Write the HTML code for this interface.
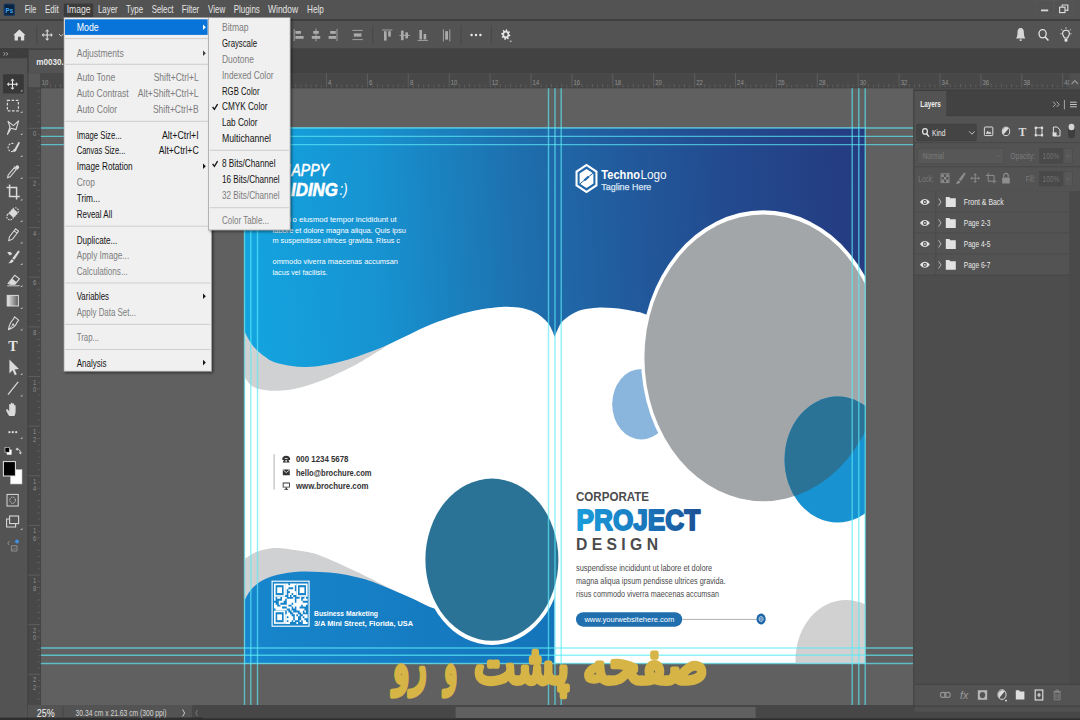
<!DOCTYPE html>
<html lang="en">
<head>
<meta charset="utf-8">
<title>Photoshop - Image &gt; Mode</title>
<style>
html,body{margin:0;padding:0;background:#535353;overflow:hidden;}
body{width:1080px;height:720px;position:relative;font-family:"Liberation Sans", sans-serif;}
svg{display:block;position:absolute;left:0;top:0;}
text{font-family:"Liberation Sans", sans-serif;white-space:pre;}
</style>
</head>
<body>
<svg width="1080" height="720" viewBox="0 0 1080 720" shape-rendering="geometricPrecision">
<defs>
<linearGradient id="gdoc" gradientUnits="userSpaceOnUse" x1="244" y1="245" x2="866" y2="205"><stop offset="0" stop-color="#13a4e0"/><stop offset="0.21" stop-color="#1793d1"/><stop offset="0.44" stop-color="#1e70ae"/><stop offset="0.6" stop-color="#215c9e"/><stop offset="0.79" stop-color="#23498e"/><stop offset="1" stop-color="#253b80"/></linearGradient>
<linearGradient id="gbot" gradientUnits="userSpaceOnUse" x1="244" y1="600" x2="556" y2="600"><stop offset="0" stop-color="#1786cc"/><stop offset="1" stop-color="#1474ba"/></linearGradient>
<linearGradient id="gproj" gradientUnits="userSpaceOnUse" x1="576" y1="0" x2="701" y2="0"><stop offset="0" stop-color="#199ddb"/><stop offset="0.45" stop-color="#1a7fc4"/><stop offset="1" stop-color="#1d4f94"/></linearGradient>
<clipPath id="cdoc"><rect x="244.5" y="127.5" width="620.8" height="536"/></clipPath>
<clipPath id="cgrey"><ellipse cx="763.2" cy="357.8" rx="118.8" ry="143.4"/></clipPath>
<filter id="sh" x="-10%" y="-10%" width="120%" height="120%"><feDropShadow dx="1.5" dy="1.5" stdDeviation="1.2" flood-color="#000" flood-opacity="0.45"/></filter>
</defs>
<rect x="0.0" y="0.0" width="1080.0" height="720.0" fill="#535353" />
<rect x="0.0" y="19.3" width="1080.0" height="1.5" fill="#3a3a3a" />
<rect x="0.0" y="48.3" width="1080.0" height="25.0" fill="#424242" />
<rect x="28.5" y="50.0" width="120.0" height="23.3" fill="#535353" />
<rect x="0.0" y="48.3" width="27.5" height="10.0" fill="#3d3d3d" />
<rect x="40.5" y="88.0" width="873.0" height="617.0" fill="#606060" />
<rect x="28.0" y="73.3" width="1052.0" height="14.5" fill="#484848" />
<rect x="28.0" y="73.3" width="12.7" height="632.0" fill="#484848" />
<rect x="0.0" y="58.3" width="27.7" height="662.0" fill="#535353" />
<line x1="27.9" y1="48.3" x2="27.9" y2="720.0" stroke="#3c3c3c" stroke-width="0.8" />
<g clip-path="url(#cdoc)">
<rect x="244.5" y="127.5" width="620.8" height="536.0" fill="#ffffff" />
<path d="M244.5,300 L244.5,376.7 C245.4,377.9 248.0,382.3 250.0,384.2 C252.0,386.1 254.2,387.3 256.7,388.3 C259.2,389.3 262.2,389.6 265.0,390.0 C267.8,390.4 269.1,390.9 273.3,390.8 C277.5,390.8 284.4,390.5 290.0,389.7 C295.6,388.9 301.1,387.4 306.7,385.8 C312.2,384.2 317.8,382.2 323.3,380.0 C328.9,377.8 334.4,375.1 340.0,372.5 C345.6,369.9 351.1,367.2 356.7,364.2 C362.2,361.1 369.1,356.7 373.3,354.2 C377.5,351.7 378.6,351.2 381.7,349.2 C384.8,347.2 390.3,343.2 392.0,342.0 L392,300 Z" fill="#d0d1d2"/>
<path d="M244.3,127.5 L244.3,330.8 C245.2,332.6 247.9,338.5 250.0,341.7 C252.1,344.9 254.2,347.5 256.7,350.0 C259.2,352.5 262.2,354.8 265.0,356.7 C267.8,358.6 269.1,360.2 273.3,361.7 C277.5,363.2 284.4,364.9 290.0,365.8 C295.6,366.7 301.1,367.1 306.7,367.0 C312.2,366.9 317.8,366.2 323.3,365.3 C328.9,364.4 334.4,363.1 340.0,361.7 C345.6,360.3 351.1,358.5 356.7,356.7 C362.2,354.9 367.8,353.0 373.3,350.8 C378.9,348.6 384.4,346.2 390.0,343.7 C395.6,341.2 400.9,338.6 406.7,335.8 C412.5,333.0 417.8,330.1 425.0,327.0 C432.2,323.9 441.7,320.2 450.0,317.5 C458.3,314.8 466.7,312.2 475.0,310.5 C483.3,308.8 493.8,307.6 500.0,307.0 C506.2,306.4 508.3,306.7 512.5,307.0 C516.7,307.3 520.8,307.7 525.0,308.8 C529.2,309.9 533.8,311.5 537.5,313.8 C541.2,316.1 545.0,319.6 547.5,322.5 C550.0,325.4 551.3,328.9 552.5,331.3 C553.7,333.7 554.2,336.1 554.5,337.0 C555.0,335.8 556.2,332.6 557.5,330.0 C558.8,327.4 559.6,324.2 562.5,321.3 C565.4,318.4 570.8,314.6 575.0,312.5 C579.2,310.4 583.3,309.6 587.5,308.8 C591.7,308.0 595.8,307.6 600.0,307.5 C604.2,307.4 608.3,307.7 612.5,308.0 C616.7,308.3 620.8,308.8 625.0,309.5 C629.2,310.2 634.0,311.2 637.5,312.0 C641.0,312.8 635.6,310.7 646.0,314.5 C656.4,318.3 691.0,331.6 700.0,335.0 L865.3,340 L865.3,127.5 Z" fill="url(#gdoc)"/>
<path d="M244.5,559.0 C246.2,557.9 251.4,554.1 255.0,552.5 C258.6,550.9 262.3,550.0 266.0,549.3 C269.7,548.5 271.7,547.8 277.0,548.0 C282.3,548.2 290.8,549.3 298.0,550.5 C305.2,551.7 310.3,551.9 320.0,555.4 C329.7,558.9 344.2,565.9 356.3,571.6 C368.4,577.3 383.4,585.4 392.4,589.7 C401.4,594.1 403.9,594.7 410.5,597.7 C417.1,600.7 428.4,606.1 432.0,607.8 L432,663.5 L244.5,663.5 Z" fill="#d0d1d2"/>
<path d="M244.5,600.5 C245.4,598.9 247.6,594.0 250.0,591.0 C252.4,588.0 255.6,584.8 258.9,582.5 C262.2,580.2 265.8,578.5 270.0,577.0 C274.2,575.5 278.7,574.3 284.0,573.4 C289.3,572.5 296.0,571.8 302.0,571.6 C308.0,571.4 313.9,571.7 320.0,572.0 C326.1,572.3 332.3,572.6 338.3,573.4 C344.3,574.2 350.0,575.5 356.0,577.0 C362.0,578.5 365.3,579.0 374.4,582.5 C383.5,586.0 400.9,593.5 410.5,597.7 C420.1,601.9 425.4,605.4 432.0,607.8 C438.6,610.2 447.0,611.3 450.0,612.0 L470,600 L554.5,594 L554.5,663.5 L244.5,663.5 Z" fill="url(#gbot)"/>
<ellipse cx="491.9" cy="559.9" rx="69.9" ry="85.1" fill="#ffffff"/>
<ellipse cx="491.9" cy="559.65" rx="66.5" ry="81.05" fill="#2a7396"/>
<ellipse cx="641.3" cy="404.2" rx="29.1" ry="35.3" fill="#8ab5dc"/>
<ellipse cx="763.2" cy="357.8" rx="122.2" ry="147.6" fill="#ffffff"/>
<ellipse cx="763.2" cy="357.8" rx="118.8" ry="143.4" fill="#a3a6a8"/>
<ellipse cx="837.6" cy="459.6" rx="53" ry="63" fill="#1892d0"/>
<ellipse cx="837.6" cy="459.6" rx="53" ry="63" fill="#2a7396" clip-path="url(#cgrey)"/>
<ellipse cx="846" cy="660" rx="50.5" ry="60" fill="#d1d1d2"/>
<text x="291.5" y="175.8" font-size="16.2" fill="#ffffff" font-style="italic" textLength="37.5" lengthAdjust="spacingAndGlyphs" stroke="#fff" stroke-width="0.55">APPY</text>
<text x="291.0" y="195.8" font-size="18.0" fill="#ffffff" font-weight="bold" font-style="italic" textLength="47.0" lengthAdjust="spacingAndGlyphs" stroke="#fff" stroke-width="0.6">IDING</text>
<text x="339.5" y="195.3" font-size="16.5" fill="#ffffff" font-style="italic" textLength="8.0" lengthAdjust="spacingAndGlyphs" >:)</text>
<text x="280.6" y="175.8" font-size="16.2" fill="#ffffff" font-style="italic" textLength="10.4" lengthAdjust="spacingAndGlyphs" >H</text>
<text x="258.5" y="195.8" font-size="18.0" fill="#ffffff" font-weight="bold" font-style="italic" textLength="32.0" lengthAdjust="spacingAndGlyphs" >REA</text>
<text x="272.5" y="222.1" font-size="8.0" fill="#ffffff" textLength="18.5" lengthAdjust="spacingAndGlyphs" >sed d</text>
<text x="272.5" y="232.7" font-size="8.0" fill="#ffffff" textLength="21.0" lengthAdjust="spacingAndGlyphs" >labore</text>
<text x="292.5" y="222.1" font-size="8.0" fill="#ffffff" textLength="104.2" lengthAdjust="spacingAndGlyphs" >o eiusmod tempor incididunt ut</text>
<text x="295.0" y="232.7" font-size="8.0" fill="#ffffff" textLength="110.8" lengthAdjust="spacingAndGlyphs" >et dolore magna aliqua. Quis ipsu</text>
<text x="272.5" y="243.4" font-size="8.0" fill="#ffffff" textLength="127.5" lengthAdjust="spacingAndGlyphs" >m suspendisse ultrices gravida. Risus c</text>
<text x="272.5" y="264.3" font-size="8.0" fill="#ffffff" textLength="125.5" lengthAdjust="spacingAndGlyphs" >ommodo viverra maecenas accumsan</text>
<text x="272.5" y="274.7" font-size="8.0" fill="#ffffff" textLength="55.0" lengthAdjust="spacingAndGlyphs" >lacus vel facilisis.</text>
<rect x="273.4" y="454.2" width="1.4" height="35.4" fill="#c6c6c6" />
<text x="296.0" y="461.8" font-size="8.3" fill="#333333" font-weight="bold" textLength="52.5" lengthAdjust="spacingAndGlyphs" >000 1234 5678</text>
<text x="296.0" y="475.8" font-size="8.3" fill="#333333" font-weight="bold" textLength="75.5" lengthAdjust="spacingAndGlyphs" >hello@brochure.com</text>
<text x="296.0" y="488.9" font-size="8.3" fill="#333333" font-weight="bold" textLength="72.5" lengthAdjust="spacingAndGlyphs" >www.brochure.com</text>
<g fill="#333333">
<path d="M282.3,458.6 c0,-3.9 7.8,-3.9 7.8,0 v1.3 h-2.3 v-1.3 c-0.9,-0.6 -2.3,-0.6 -3.2,0 v1.3 h-2.3 z"/>
<path d="M282.7,462.4 l1.7,-3.3 h3.6 l1.7,3.3 z"/>
<ellipse cx="286.2" cy="460.9" rx="0.9" ry="0.8" fill="#fff"/>
<rect x="282.8" y="469.5" width="7" height="5.8" rx="0.6"/>
<path d="M283.2,470 l3.1,2.6 3.1,-2.6" fill="none" stroke="#fff" stroke-width="0.8"/>
<path d="M282.7,482.6 h7.2 v5 h-7.2 z M283.6,483.4 v3.4 h5.4 v-3.4 z" fill-rule="evenodd"/>
<rect x="285.6" y="487.6" width="1.4" height="1.5"/><rect x="284.4" y="488.9" width="3.8" height="0.9"/>
</g>
<path d="M285.20,583.40h1.60v1.93h-1.60zM286.80,583.40h1.60v1.93h-1.60zM290.00,583.40h1.60v1.93h-1.60zM291.60,583.40h1.60v1.93h-1.60zM293.20,583.40h1.60v1.93h-1.60zM294.80,583.40h1.60v1.93h-1.60zM285.20,585.33h1.60v1.93h-1.60zM286.80,585.33h1.60v1.93h-1.60zM288.40,585.33h1.60v1.93h-1.60zM290.00,585.33h1.60v1.93h-1.60zM291.60,585.33h1.60v1.93h-1.60zM293.20,585.33h1.60v1.93h-1.60zM285.20,587.27h1.60v1.93h-1.60zM286.80,587.27h1.60v1.93h-1.60zM293.20,587.27h1.60v1.93h-1.60zM285.20,589.20h1.60v1.93h-1.60zM288.40,589.20h1.60v1.93h-1.60zM290.00,589.20h1.60v1.93h-1.60zM291.60,589.20h1.60v1.93h-1.60zM293.20,589.20h1.60v1.93h-1.60zM285.20,591.13h1.60v1.93h-1.60zM290.00,591.13h1.60v1.93h-1.60zM291.60,591.13h1.60v1.93h-1.60zM293.20,591.13h1.60v1.93h-1.60zM294.80,591.13h1.60v1.93h-1.60zM285.20,593.07h1.60v1.93h-1.60zM288.40,593.07h1.60v1.93h-1.60zM290.00,593.07h1.60v1.93h-1.60zM293.20,593.07h1.60v1.93h-1.60zM294.80,593.07h1.60v1.93h-1.60zM288.40,595.00h1.60v1.93h-1.60zM291.60,595.00h1.60v1.93h-1.60zM274.00,596.93h1.60v1.93h-1.60zM277.20,596.93h1.60v1.93h-1.60zM278.80,596.93h1.60v1.93h-1.60zM282.00,596.93h1.60v1.93h-1.60zM283.60,596.93h1.60v1.93h-1.60zM285.20,596.93h1.60v1.93h-1.60zM293.20,596.93h1.60v1.93h-1.60zM299.60,596.93h1.60v1.93h-1.60zM304.40,596.93h1.60v1.93h-1.60zM274.00,598.87h1.60v1.93h-1.60zM282.00,598.87h1.60v1.93h-1.60zM283.60,598.87h1.60v1.93h-1.60zM286.80,598.87h1.60v1.93h-1.60zM288.40,598.87h1.60v1.93h-1.60zM290.00,598.87h1.60v1.93h-1.60zM291.60,598.87h1.60v1.93h-1.60zM293.20,598.87h1.60v1.93h-1.60zM296.40,598.87h1.60v1.93h-1.60zM298.00,598.87h1.60v1.93h-1.60zM299.60,598.87h1.60v1.93h-1.60zM302.80,598.87h1.60v1.93h-1.60zM304.40,598.87h1.60v1.93h-1.60zM306.00,598.87h1.60v1.93h-1.60zM278.80,600.80h1.60v1.93h-1.60zM280.40,600.80h1.60v1.93h-1.60zM282.00,600.80h1.60v1.93h-1.60zM286.80,600.80h1.60v1.93h-1.60zM288.40,600.80h1.60v1.93h-1.60zM290.00,600.80h1.60v1.93h-1.60zM291.60,600.80h1.60v1.93h-1.60zM293.20,600.80h1.60v1.93h-1.60zM296.40,600.80h1.60v1.93h-1.60zM298.00,600.80h1.60v1.93h-1.60zM299.60,600.80h1.60v1.93h-1.60zM301.20,600.80h1.60v1.93h-1.60zM274.00,602.73h1.60v1.93h-1.60zM278.80,602.73h1.60v1.93h-1.60zM286.80,602.73h1.60v1.93h-1.60zM288.40,602.73h1.60v1.93h-1.60zM290.00,602.73h1.60v1.93h-1.60zM293.20,602.73h1.60v1.93h-1.60zM294.80,602.73h1.60v1.93h-1.60zM296.40,602.73h1.60v1.93h-1.60zM298.00,602.73h1.60v1.93h-1.60zM299.60,602.73h1.60v1.93h-1.60zM301.20,602.73h1.60v1.93h-1.60zM302.80,602.73h1.60v1.93h-1.60zM304.40,602.73h1.60v1.93h-1.60zM306.00,602.73h1.60v1.93h-1.60zM274.00,604.67h1.60v1.93h-1.60zM275.60,604.67h1.60v1.93h-1.60zM280.40,604.67h1.60v1.93h-1.60zM282.00,604.67h1.60v1.93h-1.60zM283.60,604.67h1.60v1.93h-1.60zM285.20,604.67h1.60v1.93h-1.60zM286.80,604.67h1.60v1.93h-1.60zM291.60,604.67h1.60v1.93h-1.60zM293.20,604.67h1.60v1.93h-1.60zM294.80,604.67h1.60v1.93h-1.60zM296.40,604.67h1.60v1.93h-1.60zM298.00,604.67h1.60v1.93h-1.60zM299.60,604.67h1.60v1.93h-1.60zM302.80,604.67h1.60v1.93h-1.60zM304.40,604.67h1.60v1.93h-1.60zM274.00,606.60h1.60v1.93h-1.60zM275.60,606.60h1.60v1.93h-1.60zM277.20,606.60h1.60v1.93h-1.60zM278.80,606.60h1.60v1.93h-1.60zM280.40,606.60h1.60v1.93h-1.60zM286.80,606.60h1.60v1.93h-1.60zM288.40,606.60h1.60v1.93h-1.60zM290.00,606.60h1.60v1.93h-1.60zM293.20,606.60h1.60v1.93h-1.60zM296.40,606.60h1.60v1.93h-1.60zM298.00,606.60h1.60v1.93h-1.60zM275.60,608.53h1.60v1.93h-1.60zM277.20,608.53h1.60v1.93h-1.60zM278.80,608.53h1.60v1.93h-1.60zM280.40,608.53h1.60v1.93h-1.60zM282.00,608.53h1.60v1.93h-1.60zM283.60,608.53h1.60v1.93h-1.60zM285.20,608.53h1.60v1.93h-1.60zM290.00,608.53h1.60v1.93h-1.60zM296.40,608.53h1.60v1.93h-1.60zM298.00,608.53h1.60v1.93h-1.60zM299.60,608.53h1.60v1.93h-1.60zM301.20,608.53h1.60v1.93h-1.60zM302.80,608.53h1.60v1.93h-1.60zM286.80,610.47h1.60v1.93h-1.60zM291.60,610.47h1.60v1.93h-1.60zM299.60,610.47h1.60v1.93h-1.60zM301.20,610.47h1.60v1.93h-1.60zM304.40,610.47h1.60v1.93h-1.60zM286.80,612.40h1.60v1.93h-1.60zM288.40,612.40h1.60v1.93h-1.60zM293.20,612.40h1.60v1.93h-1.60zM294.80,612.40h1.60v1.93h-1.60zM296.40,612.40h1.60v1.93h-1.60zM301.20,612.40h1.60v1.93h-1.60zM285.20,614.33h1.60v1.93h-1.60zM286.80,614.33h1.60v1.93h-1.60zM288.40,614.33h1.60v1.93h-1.60zM290.00,614.33h1.60v1.93h-1.60zM294.80,614.33h1.60v1.93h-1.60zM298.00,614.33h1.60v1.93h-1.60zM302.80,614.33h1.60v1.93h-1.60zM304.40,614.33h1.60v1.93h-1.60zM306.00,614.33h1.60v1.93h-1.60zM285.20,616.27h1.60v1.93h-1.60zM288.40,616.27h1.60v1.93h-1.60zM290.00,616.27h1.60v1.93h-1.60zM291.60,616.27h1.60v1.93h-1.60zM294.80,616.27h1.60v1.93h-1.60zM296.40,616.27h1.60v1.93h-1.60zM301.20,616.27h1.60v1.93h-1.60zM304.40,616.27h1.60v1.93h-1.60zM306.00,616.27h1.60v1.93h-1.60zM285.20,618.20h1.60v1.93h-1.60zM286.80,618.20h1.60v1.93h-1.60zM288.40,618.20h1.60v1.93h-1.60zM290.00,618.20h1.60v1.93h-1.60zM291.60,618.20h1.60v1.93h-1.60zM294.80,618.20h1.60v1.93h-1.60zM296.40,618.20h1.60v1.93h-1.60zM301.20,618.20h1.60v1.93h-1.60zM302.80,618.20h1.60v1.93h-1.60zM285.20,620.13h1.60v1.93h-1.60zM288.40,620.13h1.60v1.93h-1.60zM290.00,620.13h1.60v1.93h-1.60zM293.20,620.13h1.60v1.93h-1.60zM299.60,620.13h1.60v1.93h-1.60zM302.80,620.13h1.60v1.93h-1.60zM304.40,620.13h1.60v1.93h-1.60zM285.20,622.07h1.60v1.93h-1.60zM286.80,622.07h1.60v1.93h-1.60zM288.40,622.07h1.60v1.93h-1.60zM296.40,622.07h1.60v1.93h-1.60zM302.80,622.07h1.60v1.93h-1.60zM304.40,622.07h1.60v1.93h-1.60zM306.00,622.07h1.60v1.93h-1.60z" fill="#ffffff"/>
<rect x="274.80" y="584.37" width="9.60" height="11.60" fill="none" stroke="#fff" stroke-width="1.60"/>
<rect x="277.20" y="587.27" width="4.80" height="5.80" fill="#fff"/>
<rect x="274.80" y="611.43" width="9.60" height="11.60" fill="none" stroke="#fff" stroke-width="1.60"/>
<rect x="277.20" y="614.33" width="4.80" height="5.80" fill="#fff"/>
<rect x="297.20" y="584.37" width="9.60" height="11.60" fill="none" stroke="#fff" stroke-width="1.60"/>
<rect x="299.60" y="587.27" width="4.80" height="5.80" fill="#fff"/>
<rect x="272.1" y="581.2" width="37" height="45" fill="none" stroke="#ffffff" stroke-width="1.1"/>
<text x="314.0" y="615.7" font-size="7.6" fill="#ffffff" font-weight="bold" textLength="64.0" lengthAdjust="spacingAndGlyphs" >Business Marketing</text>
<text x="314.0" y="625.7" font-size="7.6" fill="#ffffff" font-weight="bold" textLength="99.0" lengthAdjust="spacingAndGlyphs" >3/A Mini Street, Florida, USA</text>
<g transform="translate(586.5,178.5)">
<path d="M0,-14.8 L11,-7.4 L11,7.4 L0,14.8 L-11,7.4 L-11,-7.4 Z" fill="#ffffff"/>
<path d="M0,-12.2 L8.9,-6.2 L8.9,6.2 L0,12.2 L-8.9,6.2 L-8.9,-6.2 Z" fill="#2066a8"/>
<path d="M0,-9.6 L6.9,-5 L6.9,5 L0,9.6 L-6.9,5 L-6.9,-5 Z" fill="#ffffff"/>
<path d="M-6.9,5.6 L6.9,-5.6" stroke="#2066a8" stroke-width="1.0"/>
<path d="M-2.2,2 L2.2,-2" stroke="#2066a8" stroke-width="2.3"/>
</g>
<text x="601.3" y="178.9" font-size="12.2" fill="#ffffff" font-weight="bold" textLength="38.7" lengthAdjust="spacingAndGlyphs" >Techno</text>
<text x="640.4" y="178.9" font-size="12.2" fill="#f2f6fb" textLength="26.3" lengthAdjust="spacingAndGlyphs" >Logo</text>
<text x="601.3" y="189.8" font-size="9.0" fill="#d9e5f4" textLength="50.0" lengthAdjust="spacingAndGlyphs" stroke="#d9e5f4" stroke-width="0.25">Tagline Here</text>
<text x="576.0" y="501.1" font-size="12.4" fill="#4b4b4d" font-weight="bold" textLength="73.0" lengthAdjust="spacingAndGlyphs" >CORPORATE</text>
<text x="576.6" y="529.9" font-size="28.6" fill="url(#gproj)" font-weight="bold" textLength="123.6" lengthAdjust="spacingAndGlyphs" stroke="url(#gproj)" stroke-width="1.8" stroke-linejoin="round">PROJECT</text>
<text x="576.0" y="549.6" font-size="15.6" fill="#4b4b4d" font-weight="bold" textLength="82.0" lengthAdjust="spacingAndGlyphs" >D E S I G N</text>
<text x="576.0" y="571.1" font-size="8.2" fill="#4a4a4a" textLength="136.2" lengthAdjust="spacingAndGlyphs" >suspendisse incididunt ut labore et dolore</text>
<text x="576.0" y="584.3" font-size="8.2" fill="#4a4a4a" textLength="149.6" lengthAdjust="spacingAndGlyphs" >magna aliqua ipsum pendisse ultrices gravida.</text>
<text x="576.0" y="597.4" font-size="8.2" fill="#4a4a4a" textLength="143.0" lengthAdjust="spacingAndGlyphs" >risus commodo viverra maecenas accumsan</text>
<rect x="576" y="612.2" width="106.2" height="14.5" rx="7.2" fill="#2070b0"/>
<text x="584.4" y="622.1" font-size="7.6" fill="#ffffff" textLength="90.0" lengthAdjust="spacingAndGlyphs" >www.yourwebsitehere.com</text>
<line x1="682.2" y1="619.4" x2="757.0" y2="619.4" stroke="#9a9a9a" stroke-width="0.8" />
<ellipse cx="761.1" cy="619" rx="4.6" ry="5.4" fill="#1f66a8"/>
<ellipse cx="761.1" cy="619" rx="2.1" ry="2.5" fill="none" stroke="#dfeaf6" stroke-width="0.7"/>
<path d="M759,619 h4.2 M761.1,616.5 v5" stroke="#dfeaf6" stroke-width="0.5" fill="none"/>
</g>
<g stroke="#5ceaf8" stroke-width="1.4" stroke-opacity="0.68">
<line x1="40.5" y1="128.0" x2="913.3" y2="128.0"/>
<line x1="40.5" y1="136.4" x2="913.3" y2="136.4"/>
<line x1="40.5" y1="144.6" x2="913.3" y2="144.6"/>
<line x1="40.5" y1="648.0" x2="913.3" y2="648.0"/>
<line x1="40.5" y1="655.3" x2="913.3" y2="655.3"/>
<line x1="40.5" y1="663.5" x2="913.3" y2="663.5"/>
<line x1="244.5" y1="88" x2="244.5" y2="705"/>
<line x1="250.8" y1="88" x2="250.8" y2="705"/>
<line x1="257.5" y1="88" x2="257.5" y2="705"/>
<line x1="548.5" y1="88" x2="548.5" y2="705"/>
<line x1="555.0" y1="88" x2="555.0" y2="705"/>
<line x1="561.2" y1="88" x2="561.2" y2="705"/>
<line x1="852.2" y1="88" x2="852.2" y2="705"/>
<line x1="858.8" y1="88" x2="858.8" y2="705"/>
<line x1="865.2" y1="88" x2="865.2" y2="705"/>
</g>
<g stroke="#6c6c6c" stroke-width="0.6">
<path d="M40.2,73.5V87.8M45.3,85.2V87.8M50.4,84.0V87.8M55.5,85.2V87.8M60.6,84.0V87.8M65.8,85.2V87.8M70.9,84.0V87.8M76.0,85.2V87.8M81.1,73.5V87.8M86.2,85.2V87.8M91.3,84.0V87.8M96.4,85.2V87.8M101.5,84.0V87.8M106.7,85.2V87.8M111.8,84.0V87.8M116.9,85.2V87.8M122.0,73.5V87.8M127.1,85.2V87.8M132.2,84.0V87.8M137.3,85.2V87.8M142.4,84.0V87.8M147.6,85.2V87.8M152.7,84.0V87.8M157.8,85.2V87.8M162.9,73.5V87.8M168.0,85.2V87.8M173.1,84.0V87.8M178.2,85.2V87.8M183.3,84.0V87.8M188.5,85.2V87.8M193.6,84.0V87.8M198.7,85.2V87.8M203.8,73.5V87.8M208.9,85.2V87.8M214.0,84.0V87.8M219.1,85.2V87.8M224.2,84.0V87.8M229.4,85.2V87.8M234.5,84.0V87.8M239.6,85.2V87.8M244.7,73.5V87.8M249.8,85.2V87.8M254.9,84.0V87.8M260.0,85.2V87.8M265.1,84.0V87.8M270.3,85.2V87.8M275.4,84.0V87.8M280.5,85.2V87.8M285.6,73.5V87.8M290.7,85.2V87.8M295.8,84.0V87.8M300.9,85.2V87.8M306.0,84.0V87.8M311.2,85.2V87.8M316.3,84.0V87.8M321.4,85.2V87.8M326.5,73.5V87.8M331.6,85.2V87.8M336.7,84.0V87.8M341.8,85.2V87.8M346.9,84.0V87.8M352.1,85.2V87.8M357.2,84.0V87.8M362.3,85.2V87.8M367.4,73.5V87.8M372.5,85.2V87.8M377.6,84.0V87.8M382.7,85.2V87.8M387.8,84.0V87.8M393.0,85.2V87.8M398.1,84.0V87.8M403.2,85.2V87.8M408.3,73.5V87.8M413.4,85.2V87.8M418.5,84.0V87.8M423.6,85.2V87.8M428.7,84.0V87.8M433.9,85.2V87.8M439.0,84.0V87.8M444.1,85.2V87.8M449.2,73.5V87.8M454.3,85.2V87.8M459.4,84.0V87.8M464.5,85.2V87.8M469.6,84.0V87.8M474.8,85.2V87.8M479.9,84.0V87.8M485.0,85.2V87.8M490.1,73.5V87.8M495.2,85.2V87.8M500.3,84.0V87.8M505.4,85.2V87.8M510.5,84.0V87.8M515.7,85.2V87.8M520.8,84.0V87.8M525.9,85.2V87.8M531.0,73.5V87.8M536.1,85.2V87.8M541.2,84.0V87.8M546.3,85.2V87.8M551.5,84.0V87.8M556.6,85.2V87.8M561.7,84.0V87.8M566.8,85.2V87.8M571.9,73.5V87.8M577.0,85.2V87.8M582.1,84.0V87.8M587.2,85.2V87.8M592.4,84.0V87.8M597.5,85.2V87.8M602.6,84.0V87.8M607.7,85.2V87.8M612.8,73.5V87.8M617.9,85.2V87.8M623.0,84.0V87.8M628.1,85.2V87.8M633.2,84.0V87.8M638.4,85.2V87.8M643.5,84.0V87.8M648.6,85.2V87.8M653.7,73.5V87.8M658.8,85.2V87.8M663.9,84.0V87.8M669.0,85.2V87.8M674.2,84.0V87.8M679.3,85.2V87.8M684.4,84.0V87.8M689.5,85.2V87.8M694.6,73.5V87.8M699.7,85.2V87.8M704.8,84.0V87.8M709.9,85.2V87.8M715.0,84.0V87.8M720.2,85.2V87.8M725.3,84.0V87.8M730.4,85.2V87.8M735.5,73.5V87.8M740.6,85.2V87.8M745.7,84.0V87.8M750.8,85.2V87.8M756.0,84.0V87.8M761.1,85.2V87.8M766.2,84.0V87.8M771.3,85.2V87.8M776.4,73.5V87.8M781.5,85.2V87.8M786.6,84.0V87.8M791.7,85.2V87.8M796.8,84.0V87.8M802.0,85.2V87.8M807.1,84.0V87.8M812.2,85.2V87.8M817.3,73.5V87.8M822.4,85.2V87.8M827.5,84.0V87.8M832.6,85.2V87.8M837.8,84.0V87.8M842.9,85.2V87.8M848.0,84.0V87.8M853.1,85.2V87.8M858.2,73.5V87.8M863.3,85.2V87.8M868.4,84.0V87.8M873.5,85.2V87.8M878.7,84.0V87.8M883.8,85.2V87.8M888.9,84.0V87.8M894.0,85.2V87.8M899.1,73.5V87.8M904.2,85.2V87.8M909.3,84.0V87.8M914.4,85.2V87.8M919.5,84.0V87.8M924.7,85.2V87.8M929.8,84.0V87.8M934.9,85.2V87.8M940.0,73.5V87.8M945.1,85.2V87.8M950.2,84.0V87.8M955.3,85.2V87.8M960.5,84.0V87.8M965.6,85.2V87.8M970.7,84.0V87.8M975.8,85.2V87.8M980.9,73.5V87.8M986.0,85.2V87.8M991.1,84.0V87.8M996.2,85.2V87.8M1001.3,84.0V87.8M1006.5,85.2V87.8M1011.6,84.0V87.8M1016.7,85.2V87.8M1021.8,73.5V87.8M1026.9,85.2V87.8M1032.0,84.0V87.8M1037.1,85.2V87.8M1042.2,84.0V87.8M1047.4,85.2V87.8M1052.5,84.0V87.8M1057.6,85.2V87.8M1062.7,73.5V87.8M1067.8,85.2V87.8" fill="none"/>
</g>
<text x="41.8" y="84.6" font-size="8.0" fill="#939393" textLength="6.6" lengthAdjust="spacingAndGlyphs" >10</text>
<text x="82.7" y="84.6" font-size="8.0" fill="#939393" textLength="3.4" lengthAdjust="spacingAndGlyphs" >8</text>
<text x="123.6" y="84.6" font-size="8.0" fill="#939393" textLength="3.4" lengthAdjust="spacingAndGlyphs" >6</text>
<text x="164.5" y="84.6" font-size="8.0" fill="#939393" textLength="3.4" lengthAdjust="spacingAndGlyphs" >4</text>
<text x="205.4" y="84.6" font-size="8.0" fill="#939393" textLength="3.4" lengthAdjust="spacingAndGlyphs" >2</text>
<text x="246.3" y="84.6" font-size="8.0" fill="#939393" textLength="3.4" lengthAdjust="spacingAndGlyphs" >0</text>
<text x="287.2" y="84.6" font-size="8.0" fill="#939393" textLength="3.4" lengthAdjust="spacingAndGlyphs" >2</text>
<text x="328.1" y="84.6" font-size="8.0" fill="#939393" textLength="3.4" lengthAdjust="spacingAndGlyphs" >4</text>
<text x="369.0" y="84.6" font-size="8.0" fill="#939393" textLength="3.4" lengthAdjust="spacingAndGlyphs" >6</text>
<text x="409.9" y="84.6" font-size="8.0" fill="#939393" textLength="3.4" lengthAdjust="spacingAndGlyphs" >8</text>
<text x="450.8" y="84.6" font-size="8.0" fill="#939393" textLength="6.6" lengthAdjust="spacingAndGlyphs" >10</text>
<text x="491.7" y="84.6" font-size="8.0" fill="#939393" textLength="6.6" lengthAdjust="spacingAndGlyphs" >12</text>
<text x="532.6" y="84.6" font-size="8.0" fill="#939393" textLength="6.6" lengthAdjust="spacingAndGlyphs" >14</text>
<text x="573.5" y="84.6" font-size="8.0" fill="#939393" textLength="6.6" lengthAdjust="spacingAndGlyphs" >16</text>
<text x="614.4" y="84.6" font-size="8.0" fill="#939393" textLength="6.6" lengthAdjust="spacingAndGlyphs" >18</text>
<text x="655.3" y="84.6" font-size="8.0" fill="#939393" textLength="6.6" lengthAdjust="spacingAndGlyphs" >20</text>
<text x="696.2" y="84.6" font-size="8.0" fill="#939393" textLength="6.6" lengthAdjust="spacingAndGlyphs" >22</text>
<text x="737.1" y="84.6" font-size="8.0" fill="#939393" textLength="6.6" lengthAdjust="spacingAndGlyphs" >24</text>
<text x="778.0" y="84.6" font-size="8.0" fill="#939393" textLength="6.6" lengthAdjust="spacingAndGlyphs" >26</text>
<text x="818.9" y="84.6" font-size="8.0" fill="#939393" textLength="6.6" lengthAdjust="spacingAndGlyphs" >28</text>
<text x="859.8" y="84.6" font-size="8.0" fill="#939393" textLength="6.6" lengthAdjust="spacingAndGlyphs" >30</text>
<text x="900.7" y="84.6" font-size="8.0" fill="#939393" textLength="6.6" lengthAdjust="spacingAndGlyphs" >32</text>
<text x="941.6" y="84.6" font-size="8.0" fill="#939393" textLength="6.6" lengthAdjust="spacingAndGlyphs" >34</text>
<text x="982.5" y="84.6" font-size="8.0" fill="#939393" textLength="6.6" lengthAdjust="spacingAndGlyphs" >36</text>
<text x="1023.4" y="84.6" font-size="8.0" fill="#939393" textLength="6.6" lengthAdjust="spacingAndGlyphs" >38</text>
<text x="1064.3" y="84.6" font-size="8.0" fill="#939393" textLength="6.6" lengthAdjust="spacingAndGlyphs" >40</text>
<g stroke="#6c6c6c" stroke-width="0.6">
<path d="M28.2,128.3H40.4M38.0,134.5H40.4M36.8,140.7H40.4M38.0,146.9H40.4M36.8,153.1H40.4M38.0,159.3H40.4M36.8,165.5H40.4M38.0,171.7H40.4M28.2,177.9H40.4M38.0,184.1H40.4M36.8,190.3H40.4M38.0,196.6H40.4M36.8,202.8H40.4M38.0,209.0H40.4M36.8,215.2H40.4M38.0,221.4H40.4M28.2,227.6H40.4M38.0,233.8H40.4M36.8,240.0H40.4M38.0,246.2H40.4M36.8,252.4H40.4M38.0,258.6H40.4M36.8,264.8H40.4M38.0,271.0H40.4M28.2,277.2H40.4M38.0,283.4H40.4M36.8,289.6H40.4M38.0,295.8H40.4M36.8,302.0H40.4M38.0,308.2H40.4M36.8,314.5H40.4M38.0,320.7H40.4M28.2,326.9H40.4M38.0,333.1H40.4M36.8,339.3H40.4M38.0,345.5H40.4M36.8,351.7H40.4M38.0,357.9H40.4M36.8,364.1H40.4M38.0,370.3H40.4M28.2,376.5H40.4M38.0,382.7H40.4M36.8,388.9H40.4M38.0,395.1H40.4M36.8,401.3H40.4M38.0,407.5H40.4M36.8,413.7H40.4M38.0,419.9H40.4M28.2,426.1H40.4M38.0,432.3H40.4M36.8,438.6H40.4M38.0,444.8H40.4M36.8,451.0H40.4M38.0,457.2H40.4M36.8,463.4H40.4M38.0,469.6H40.4M28.2,475.8H40.4M38.0,482.0H40.4M36.8,488.2H40.4M38.0,494.4H40.4M36.8,500.6H40.4M38.0,506.8H40.4M36.8,513.0H40.4M38.0,519.2H40.4M28.2,525.4H40.4M38.0,531.6H40.4M36.8,537.8H40.4M38.0,544.0H40.4M36.8,550.2H40.4M38.0,556.4H40.4M36.8,562.7H40.4M38.0,568.9H40.4M28.2,575.1H40.4M38.0,581.3H40.4M36.8,587.5H40.4M38.0,593.7H40.4M36.8,599.9H40.4M38.0,606.1H40.4M36.8,612.3H40.4M38.0,618.5H40.4M28.2,624.7H40.4M38.0,630.9H40.4M36.8,637.1H40.4M38.0,643.3H40.4M36.8,649.5H40.4M38.0,655.7H40.4M36.8,661.9H40.4M38.0,668.1H40.4M28.2,674.3H40.4M38.0,680.5H40.4M36.8,686.7H40.4M38.0,693.0H40.4M36.8,699.2H40.4M38.0,122.1H40.4M36.8,115.9H40.4M38.0,109.7H40.4M36.8,103.5H40.4M38.0,97.3H40.4M36.8,91.1H40.4" fill="none"/>
</g>
<text x="33.0" y="136.3" font-size="7.6" fill="#939393" textLength="3.2" lengthAdjust="spacingAndGlyphs" >0</text>
<text x="33.0" y="185.9" font-size="7.6" fill="#939393" textLength="3.2" lengthAdjust="spacingAndGlyphs" >2</text>
<text x="33.0" y="235.6" font-size="7.6" fill="#939393" textLength="3.2" lengthAdjust="spacingAndGlyphs" >4</text>
<text x="33.0" y="285.2" font-size="7.6" fill="#939393" textLength="3.2" lengthAdjust="spacingAndGlyphs" >6</text>
<text x="33.0" y="334.9" font-size="7.6" fill="#939393" textLength="3.2" lengthAdjust="spacingAndGlyphs" >8</text>
<text x="33.0" y="384.5" font-size="7.6" fill="#939393" textLength="3.2" lengthAdjust="spacingAndGlyphs" >1</text>
<text x="33.0" y="391.9" font-size="7.6" fill="#939393" textLength="3.2" lengthAdjust="spacingAndGlyphs" >0</text>
<text x="33.0" y="434.1" font-size="7.6" fill="#939393" textLength="3.2" lengthAdjust="spacingAndGlyphs" >1</text>
<text x="33.0" y="441.5" font-size="7.6" fill="#939393" textLength="3.2" lengthAdjust="spacingAndGlyphs" >2</text>
<text x="33.0" y="483.8" font-size="7.6" fill="#939393" textLength="3.2" lengthAdjust="spacingAndGlyphs" >1</text>
<text x="33.0" y="491.2" font-size="7.6" fill="#939393" textLength="3.2" lengthAdjust="spacingAndGlyphs" >4</text>
<text x="33.0" y="533.4" font-size="7.6" fill="#939393" textLength="3.2" lengthAdjust="spacingAndGlyphs" >1</text>
<text x="33.0" y="540.8" font-size="7.6" fill="#939393" textLength="3.2" lengthAdjust="spacingAndGlyphs" >6</text>
<text x="33.0" y="583.1" font-size="7.6" fill="#939393" textLength="3.2" lengthAdjust="spacingAndGlyphs" >1</text>
<text x="33.0" y="590.5" font-size="7.6" fill="#939393" textLength="3.2" lengthAdjust="spacingAndGlyphs" >8</text>
<text x="33.0" y="632.7" font-size="7.6" fill="#939393" textLength="3.2" lengthAdjust="spacingAndGlyphs" >2</text>
<text x="33.0" y="640.1" font-size="7.6" fill="#939393" textLength="3.2" lengthAdjust="spacingAndGlyphs" >0</text>
<text x="33.0" y="682.3" font-size="7.6" fill="#939393" textLength="3.2" lengthAdjust="spacingAndGlyphs" >2</text>
<text x="33.0" y="689.7" font-size="7.6" fill="#939393" textLength="3.2" lengthAdjust="spacingAndGlyphs" >2</text>
<rect x="28.4" y="73.3" width="12.3" height="14.2" fill="#585858" />
<line x1="28.0" y1="87.9" x2="1080.0" y2="87.9" stroke="#3e3e3e" stroke-width="0.6" />
<line x1="40.6" y1="73.3" x2="40.6" y2="705.0" stroke="#3e3e3e" stroke-width="0.6" />
<rect x="1069.5" y="73.3" width="10.5" height="15.0" fill="#4f4f4f" />
<path d="M1071.6,84 L1074.8,80.6 L1078,84" fill="none" stroke="#9a9a9a" stroke-width="1.1"/>
<rect x="3.8" y="3.8" width="11" height="12" rx="1.6" fill="#0c2340"/>
<rect x="4.3" y="4.3" width="10" height="11" rx="1.3" fill="none" stroke="#1c4f7c" stroke-width="0.6"/>
<text x="5.6" y="12.9" font-size="7.4" fill="#39a9f5" font-weight="bold" textLength="7.4" lengthAdjust="spacingAndGlyphs" >Ps</text>
<rect x="63.8" y="3.6" width="29.4" height="13.2" fill="#3b3b3b" />
<text x="24.7" y="13.4" font-size="10.2" fill="#e4e4e4" textLength="11.5" lengthAdjust="spacingAndGlyphs" >File</text>
<text x="45.0" y="13.4" font-size="10.2" fill="#e4e4e4" textLength="13.7" lengthAdjust="spacingAndGlyphs" >Edit</text>
<text x="66.7" y="13.4" font-size="10.2" fill="#e4e4e4" textLength="23.9" lengthAdjust="spacingAndGlyphs" >Image</text>
<text x="98.0" y="13.4" font-size="10.2" fill="#e4e4e4" textLength="19.6" lengthAdjust="spacingAndGlyphs" >Layer</text>
<text x="126.0" y="13.4" font-size="10.2" fill="#e4e4e4" textLength="17.2" lengthAdjust="spacingAndGlyphs" >Type</text>
<text x="151.7" y="13.4" font-size="10.2" fill="#e4e4e4" textLength="21.8" lengthAdjust="spacingAndGlyphs" >Select</text>
<text x="181.7" y="13.4" font-size="10.2" fill="#e4e4e4" textLength="17.5" lengthAdjust="spacingAndGlyphs" >Filter</text>
<text x="208.0" y="13.4" font-size="10.2" fill="#e4e4e4" textLength="17.2" lengthAdjust="spacingAndGlyphs" >View</text>
<text x="233.7" y="13.4" font-size="10.2" fill="#e4e4e4" textLength="26.1" lengthAdjust="spacingAndGlyphs" >Plugins</text>
<text x="268.0" y="13.4" font-size="10.2" fill="#e4e4e4" textLength="30.2" lengthAdjust="spacingAndGlyphs" >Window</text>
<text x="307.0" y="13.4" font-size="10.2" fill="#e4e4e4" textLength="16.8" lengthAdjust="spacingAndGlyphs" >Help</text>
<g fill="none" stroke="#626262" stroke-width="0.6" stroke-dasharray="1 1">
<rect x="1035" y="0.3" width="19" height="15.3"/><rect x="1054" y="0.3" width="19" height="15.3"/></g>
<rect x="1041.0" y="9.5" width="7.2" height="1.8" fill="#d8d8d8" />
<g fill="none" stroke="#d8d8d8" stroke-width="1.2"><rect x="1059.6" y="7.2" width="5.4" height="5.4"/><path d="M1062.2,7 V5 H1067.8 V10.4 H1065.4"/></g>
<path d="M13.2,35.2 L19.4,29.4 L25.6,35.2 L24.2,35.2 L24.2,40.6 L20.9,40.6 L20.9,36.8 L17.9,36.8 L17.9,40.6 L14.6,40.6 L14.6,35.2 Z" fill="#e0e0e0"/>
<line x1="36.8" y1="25.5" x2="36.8" y2="44.5" stroke="#454545" stroke-width="0.8" />
<g stroke="#e0e0e0" stroke-width="1.1" fill="#e0e0e0" stroke-linejoin="miter"><path d="M43.528000000000006,35H50.872M47.2,31.328000000000003V38.672" fill="none"/><path d="M41.800000000000004,35l1.7280000000000002,-1.7280000000000002v3.4560000000000004z M52.6,35l-1.7280000000000002,-1.7280000000000002v3.4560000000000004z M47.2,29.6l-1.7280000000000002,1.7280000000000002h3.4560000000000004z M47.2,40.4l-1.7280000000000002,-1.7280000000000002h3.4560000000000004z" stroke-width="0.3"/></g>
<path d="M59,34 l2.2,2.2 2.2,-2.2" fill="none" stroke="#c8c8c8" stroke-width="1"/>
<line x1="294.2" y1="29.0" x2="294.2" y2="41.0" stroke="#ababab" stroke-width="0.9" />
<rect x="295.4" y="31.0" width="5.6" height="2.8" fill="#ababab" />
<rect x="295.4" y="36.0" width="8.2" height="2.8" fill="#ababab" />
<line x1="316.0" y1="28.6" x2="316.0" y2="41.4" stroke="#ababab" stroke-width="0.9" />
<rect x="313.2" y="31.0" width="5.6" height="2.8" fill="#ababab" />
<rect x="311.8" y="36.0" width="8.4" height="2.8" fill="#ababab" />
<line x1="337.0" y1="29.0" x2="337.0" y2="41.0" stroke="#ababab" stroke-width="0.9" />
<rect x="330.2" y="31.0" width="5.6" height="2.8" fill="#ababab" />
<rect x="328.6" y="36.0" width="7.4" height="2.8" fill="#ababab" />
<line x1="352.4" y1="30.4" x2="362.8" y2="30.4" stroke="#ababab" stroke-width="0.9" />
<line x1="352.4" y1="39.6" x2="362.8" y2="39.6" stroke="#ababab" stroke-width="0.9" />
<rect x="353.8" y="33.4" width="7.6" height="3.2" fill="#ababab" />
<line x1="372.8" y1="25.5" x2="372.8" y2="44.5" stroke="#454545" stroke-width="0.8" />
<line x1="382.0" y1="30.0" x2="392.4" y2="30.0" stroke="#ababab" stroke-width="0.9" />
<rect x="384.0" y="31.2" width="2.6" height="9.4" fill="#ababab" />
<rect x="388.2" y="31.2" width="2.6" height="5.4" fill="#ababab" />
<line x1="399.4" y1="35.4" x2="410.0" y2="35.4" stroke="#ababab" stroke-width="0.9" />
<rect x="401.0" y="30.6" width="2.6" height="9.6" fill="#ababab" />
<rect x="405.4" y="32.4" width="2.6" height="6.0" fill="#ababab" />
<line x1="417.6" y1="40.4" x2="428.0" y2="40.4" stroke="#ababab" stroke-width="0.9" />
<rect x="419.4" y="30.0" width="2.6" height="9.4" fill="#ababab" />
<rect x="423.6" y="34.0" width="2.6" height="5.4" fill="#ababab" />
<line x1="443.4" y1="29.4" x2="443.4" y2="41.4" stroke="#ababab" stroke-width="0.9" />
<line x1="449.8" y1="29.4" x2="449.8" y2="41.4" stroke="#ababab" stroke-width="0.9" />
<rect x="445.2" y="31.2" width="2.8" height="8.4" fill="#ababab" />
<line x1="461.0" y1="25.5" x2="461.0" y2="44.5" stroke="#454545" stroke-width="0.8" />
<circle cx="471.6" cy="35" r="1.2" fill="#e8e8e8"/>
<circle cx="476" cy="35" r="1.2" fill="#e8e8e8"/>
<circle cx="480.4" cy="35" r="1.2" fill="#e8e8e8"/>
<line x1="491.4" y1="25.5" x2="491.4" y2="44.5" stroke="#454545" stroke-width="0.8" />
<polygon points="510.43,35.01 510.21,36.28 508.79,36.36 508.35,37.14 508.82,38.70 507.90,39.42 506.84,38.31 506.06,38.49 505.45,39.98 504.36,39.73 504.28,38.08 503.62,37.56 502.28,38.12 501.66,37.04 502.61,35.81 502.46,34.90 501.17,34.19 501.39,32.92 502.81,32.84 503.25,32.06 502.78,30.50 503.70,29.78 504.76,30.89 505.54,30.71 506.15,29.22 507.24,29.47 507.32,31.12 507.98,31.64 509.32,31.08 509.94,32.16 508.99,33.39 509.14,34.30" fill="#e4e4e4"/>
<ellipse cx="505.8" cy="34.6" rx="1.7" ry="2" fill="#535353"/>
<path d="M509.4,40.8 h2.6 l-1.3,1.5z" fill="#d0d0d0"/>
<path d="M1020.7,28 c-2.6,0 -3.2,2.4 -3.2,5 c0,2.6 -0.6,4.2 -1.5,5.4 h9.4 c-0.9,-1.2 -1.5,-2.8 -1.5,-5.4 c0,-2.6 -0.6,-5 -3.2,-5z" fill="#d6d6d6"/>
<rect x="1019.6" y="39.2" width="2.2" height="1.8" rx="0.8" fill="#d6d6d6"/>
<ellipse cx="1042.6" cy="33.8" rx="3.6" ry="4.1" fill="none" stroke="#e4e4e4" stroke-width="1.3"/>
<line x1="1045.2" y1="37.0" x2="1048.4" y2="40.6" stroke="#e4e4e4" stroke-width="1.5" />
<path d="M1066,30.2 c-2.2,0 -3.4,1.8 -3.4,3.6 c0,1.8 1.6,2.6 1.8,4.2 h3.2 c0.2,-1.6 1.8,-2.4 1.8,-4.2 c0,-1.8 -1.2,-3.6 -3.4,-3.6z" fill="none" stroke="#e8e8e8" stroke-width="1.1"/>
<rect x="1064.6" y="38.8" width="2.8" height="2.8" fill="#e8e8e8" />
<path d="M1066,27.2v1.6 M1061.2,29.2l1,1.2 M1070.8,29.2l-1,1.2 M1060.4,33.8h1.3 M1070.3,33.8h1.3" stroke="#e8e8e8" stroke-width="0.8"/>
<text x="36.2" y="64.6" font-size="9.6" fill="#eaeaea" font-weight="bold" textLength="27.6" lengthAdjust="spacingAndGlyphs" >m0030.</text>
<path d="M3.6,52.2 l1.6,1.7 -1.6,1.7 M6.2,52.2 l1.6,1.7 -1.6,1.7" fill="none" stroke="#c0c0c0" stroke-width="0.8"/>
<rect x="3.0" y="74.2" width="20.8" height="19.2" fill="#383838" rx="1.2"/>
<g stroke="#f0f0f0" stroke-width="1.1" fill="#f0f0f0" stroke-linejoin="miter"><path d="M8.828,84.2H16.171999999999997M12.5,80.52799999999999V87.87200000000001" fill="none"/><path d="M7.1,84.2l1.7280000000000002,-1.7280000000000002v3.4560000000000004z M17.9,84.2l-1.7280000000000002,-1.7280000000000002v3.4560000000000004z M12.5,78.8l-1.7280000000000002,1.7280000000000002h3.4560000000000004z M12.5,89.60000000000001l-1.7280000000000002,-1.7280000000000002h3.4560000000000004z" stroke-width="0.3"/></g>
<path d="M22.4,91.6 l-2,0 2,-2z" fill="#c4c4c4"/>
<rect x="7.4" y="100.4" width="11" height="10.4" fill="none" stroke="#dadada" stroke-width="1.2" stroke-dasharray="2.6 1.6"/>
<path d="M22.4,113 l-2,0 2,-2z" fill="#c4c4c4"/>
<path d="M8,121.4 L13.4,125.6 L18.6,120.8 L16,129.6 L11.2,128.2 L7.4,134.4 L10,127 Z" fill="none" stroke="#dadada" stroke-width="1.1" stroke-linejoin="round"/>
<path d="M22.4,135 l-2,0 2,-2z" fill="#c4c4c4"/>
<path d="M13.4,143.6 c-3,-1 -5.8,1.6 -5.2,4.8 c0.5,2.8 3,3.8 4.6,2.8" fill="none" stroke="#dadada" stroke-width="1.1" stroke-dasharray="2 1.2"/>
<path d="M12.4,151.6 c0.4,-1.6 1.2,-2.4 2.2,-2.8 l4,-7 1.4,0.9 -3.6,7.2 c0,1.2 -1.4,2.2 -4,1.7z" fill="#dadada"/>
<path d="M22.4,157 l-2,0 2,-2z" fill="#c4c4c4"/>
<path d="M7.6,177.6 l0.6,-2.6 6,-7.2 2,1.8 -6,7.2 z" fill="none" stroke="#dadada" stroke-width="1.1"/>
<path d="M13.6,166.4 l3.8,3.4 1.6,-1.8 c1,-1.2 -1.4,-3.6 -2.6,-2.4 l-1.2,1.4 -0.8,-0.8 z" fill="#dadada"/>
<path d="M22.4,179 l-2,0 2,-2z" fill="#c4c4c4"/>
<path d="M9.6,184.4 V196.4 H19.8 M6.6,187.6 H16.6 V199.4" fill="none" stroke="#dadada" stroke-width="1.5"/>
<path d="M22.4,200.6 l-2,0 2,-2z" fill="#c4c4c4"/>
<g transform="translate(12.6,213.8) rotate(-48)"><rect x="-7" y="-3.2" width="14" height="6.4" rx="3" fill="none" stroke="#dadada" stroke-width="1.1" stroke-dasharray="1.6 1"/><rect x="-2.4" y="-3.2" width="6.8" height="6.4" rx="1" fill="#dadada"/></g>
<path d="M22.4,222 l-2,0 2,-2z" fill="#c4c4c4"/>
<g transform="translate(12.8,235.6) rotate(38)"><path d="M-1.9,-7 h3.8 v10 l-1.9,3.6 l-1.9,-3.6 z M-1.9,-4.6 h3.8" fill="none" stroke="#dadada" stroke-width="1.05" stroke-linejoin="round"/></g>
<path d="M22.4,243.6 l-2,0 2,-2z" fill="#c4c4c4"/>
<path d="M18.2,250.6 l1.6,1 -5.4,8.2 -2.2,-1.4 z" fill="#dadada"/><path d="M11.8,259.2 l2,1.3 c-0.8,2.4 -3.2,3.2 -5.6,2.6 c1.8,-0.8 1.8,-2.6 3.6,-3.9z" fill="#dadada"/>
<path d="M7.2,252.2 l3,-0.4 2.2,2.2 -2.8,1.4z" fill="#dadada"/>
<path d="M22.4,265 l-2,0 2,-2z" fill="#c4c4c4"/>
<path d="M8.2,283.4 l6.6,-8.2 4.6,3.6 -4.4,5.4 -4.6,0 z" fill="none" stroke="#dadada" stroke-width="1.1"/><path d="M12.2,278.6 l4.4,3.6 -2,2.4 -4,0 -1.6,-1.6z" fill="#dadada"/>
<line x1="7.2" y1="285.8" x2="19.6" y2="285.8" stroke="#dadada" stroke-width="0.9" />
<path d="M22.4,287 l-2,0 2,-2z" fill="#c4c4c4"/>
<linearGradient id="gtool" x1="0" y1="0" x2="1" y2="0"><stop offset="0" stop-color="#ebebeb"/><stop offset="1" stop-color="#5a5a5a"/></linearGradient>
<rect x="7.2" y="295.4" width="11.2" height="10.6" fill="url(#gtool)" stroke="#dadada" stroke-width="1"/>
<path d="M22.4,309 l-2,0 2,-2z" fill="#c4c4c4"/>
<path d="M14.6,316.8 l4,3.4 -1.6,2.2 c-1,3.4 -3.4,5.6 -8.6,7.2 c1,-5 2.6,-8.2 5,-10.4z" fill="none" stroke="#dadada" stroke-width="1.1" stroke-linejoin="round"/>
<circle cx="13.2" cy="324.6" r="1.1" fill="#dadada"/><path d="M8.6,329.4 l4,-4.2" stroke="#dadada" stroke-width="0.8"/>
<path d="M22.4,330.6 l-2,0 2,-2z" fill="#c4c4c4"/>
<text x="8.2" y="350.6" font-size="15.4" fill="#e6e6e6" font-weight="bold" textLength="9.4" lengthAdjust="spacingAndGlyphs" style="font-family:'Liberation Serif',serif">T</text>
<path d="M9.4,359.6 L9.4,373.4 L12.6,370.2 L14.8,375.2 L16.8,374.2 L14.6,369.4 L19,369 Z" fill="#dadada"/>
<path d="M22.4,375 l-2,0 2,-2z" fill="#c4c4c4"/>
<line x1="8.0" y1="394.6" x2="18.2" y2="381.8" stroke="#dadada" stroke-width="1.2" />
<path d="M22.4,396.4 l-2,0 2,-2z" fill="#c4c4c4"/>
<path d="M9.2,416 c-1.6,-2.2 -2.6,-4.4 -3,-5.4 c-0.4,-1.2 1,-1.8 1.8,-0.8 l1.2,1.6 v-6.6 c0,-1.2 1.6,-1.2 1.6,0 v3.6 v-4.8 c0,-1.2 1.7,-1.2 1.7,0 v4.8 v-4.2 c0,-1.2 1.6,-1.2 1.6,0 v4.6 v-3 c0,-1.1 1.5,-1.1 1.5,0 v5.6 c0,2 -0.6,3.2 -1.2,4.6 z" fill="#dadada"/>
<circle cx="9.4" cy="432.2" r="1.15" fill="#dadada"/>
<circle cx="12.8" cy="432.2" r="1.15" fill="#dadada"/>
<circle cx="16.2" cy="432.2" r="1.15" fill="#dadada"/>
<path d="M22.4,439 l-2,0 2,-2z" fill="#c4c4c4"/>
<rect x="7" y="449.8" width="4.4" height="4.8" fill="#ffffff" stroke="#ddd" stroke-width="0.5"/><rect x="5" y="447.4" width="4.4" height="4.8" fill="#000" stroke="#ddd" stroke-width="0.6"/>
<path d="M16.6,449 c2.4,-0.4 3.8,1.4 3.8,3.8" fill="none" stroke="#dadada" stroke-width="1"/><path d="M15.4,449.2 l2.4,-1.6 v3.2z M20.4,454.6 l-1.6,-2.2 h3.2z" fill="#dadada"/>
<rect x="10.4" y="469.6" width="11.6" height="14.4" fill="#ffffff" stroke="#bdbdbd" stroke-width="0.6"/>
<rect x="3.4" y="461.6" width="12" height="14.4" fill="#000000" stroke="#e6e6e6" stroke-width="1"/>
<rect x="7" y="494.4" width="11.2" height="11.6" fill="none" stroke="#dadada" stroke-width="1"/><ellipse cx="12.6" cy="500.2" rx="2.8" ry="3.2" fill="none" stroke="#dadada" stroke-width="0.9" stroke-dasharray="1.4 1"/>
<rect x="9.6" y="516" width="9" height="7.6" fill="none" stroke="#dadada" stroke-width="1.1"/><path d="M9.4,519 H6.6 V527 H15.6 V524" fill="none" stroke="#dadada" stroke-width="1.1"/>
<path d="M22.4,530 l-2,0 2,-2z" fill="#c4c4c4"/>
<path d="M9.6,541.4 c-2,0.4 -2.2,3 -0.4,3.6 M11.4,545.8 h5.6 v5.2 h-5.6z" fill="none" stroke="#8f8f8f" stroke-width="1"/><circle cx="17" cy="541.6" r="2" fill="#3d8fe0"/>
<path d="M12.4,550 l1.6,-2 1.2,1.2 1,-0.8" fill="none" stroke="#8f8f8f" stroke-width="0.7"/>
<rect x="28.0" y="705.0" width="885.5" height="15.0" fill="#474747" />
<rect x="28.0" y="705.0" width="164.0" height="15.0" fill="#535353" />
<rect x="0.0" y="717.6" width="1080.0" height="2.4" fill="#2e2e2e" />
<text x="36.8" y="717.0" font-size="10.6" fill="#f0f0f0" textLength="17.8" lengthAdjust="spacingAndGlyphs" >25%</text>
<rect x="62.6" y="706.0" width="0.8" height="12.0" fill="#444444" />
<text x="75.6" y="716.4" font-size="8.2" fill="#d6d6d6" textLength="91.0" lengthAdjust="spacingAndGlyphs" >30.34 cm x 21.63 cm (300 ppi)</text>
<path d="M182.6,709.4 l2,3.6 -2,3.6" fill="none" stroke="#c8c8c8" stroke-width="1"/>
<path d="M197.6,709.8 l-1.8,3.2 1.8,3.2" fill="none" stroke="#7c7c7c" stroke-width="0.9"/>
<rect x="203.0" y="706.4" width="710.0" height="12.0" fill="#474747" />
<rect x="455.6" y="707.0" width="300.0" height="11.0" fill="#606060" />
<rect x="913.3" y="89.6" width="166.7" height="623.0" fill="#535353" />
<rect x="913.3" y="89.6" width="166.7" height="1.2" fill="#3a3a3a" />
<rect x="913.3" y="89.6" width="1.2" height="622.4" fill="#424242" />
<rect x="946.3" y="90.8" width="134.0" height="24.8" fill="#424242" />
<line x1="946.3" y1="115.6" x2="1080.0" y2="115.6" stroke="#3c3c3c" stroke-width="0.8" />
<text x="920.3" y="107.3" font-size="9.8" fill="#f0f0f0" font-weight="bold" textLength="20.6" lengthAdjust="spacingAndGlyphs" >Layers</text>
<path d="M1053,101.6 l2.6,2.7 -2.6,2.7 M1056.6,101.6 l2.6,2.7 -2.6,2.7" fill="none" stroke="#c6c6c6" stroke-width="0.8"/>
<line x1="1064.4" y1="100.0" x2="1064.4" y2="109.4" stroke="#c0c0c0" stroke-width="0.8" />
<line x1="1070.0" y1="102.2" x2="1076.8" y2="102.2" stroke="#c6c6c6" stroke-width="1" />
<line x1="1070.0" y1="104.5" x2="1076.8" y2="104.5" stroke="#c6c6c6" stroke-width="1" />
<line x1="1070.0" y1="106.8" x2="1076.8" y2="106.8" stroke="#c6c6c6" stroke-width="1" />
<rect x="916.7" y="124.2" width="59.6" height="16.6" rx="1" fill="#444444" stroke="#3a3a3a" stroke-width="0.6"/>
<ellipse cx="925" cy="131.4" rx="2.4" ry="2.8" fill="none" stroke="#e8e8e8" stroke-width="1.2"/>
<line x1="926.6" y1="133.8" x2="929.0" y2="136.6" stroke="#e8e8e8" stroke-width="1.4" />
<text x="932.0" y="136.0" font-size="9.6" fill="#ececec" textLength="13.4" lengthAdjust="spacingAndGlyphs" >Kind</text>
<path d="M969.2,131.4 l2.7,2.8 2.7,-2.8" fill="none" stroke="#cfcfcf" stroke-width="0.9"/>
<rect x="984.4" y="127" width="8.4" height="8.6" rx="0.8" fill="none" stroke="#dcdcdc" stroke-width="1"/><path d="M985.8,133.8 l1.8,-3 1.4,1.8 1,-1 1.6,2.2z" fill="#dcdcdc"/>
<ellipse cx="1006" cy="131.4" rx="3.7" ry="4.3" fill="none" stroke="#dcdcdc" stroke-width="1"/><path d="M1003.4,134.4 A3.7,4.3 0 0 1 1008.6,128.4 Z" fill="#dcdcdc"/>
<text x="1018.6" y="136.2" font-size="12.4" fill="#dcdcdc" font-weight="bold" textLength="7.8" lengthAdjust="spacingAndGlyphs" style="font-family:'Liberation Serif',serif">T</text>
<rect x="1035.8" y="127.8" width="6.2" height="7.4" fill="none" stroke="#dcdcdc" stroke-width="1"/>
<rect x="1034.7" y="126.6" width="2.2" height="2.4" fill="#dcdcdc"/>
<rect x="1040.9" y="126.6" width="2.2" height="2.4" fill="#dcdcdc"/>
<rect x="1034.7" y="134.0" width="2.2" height="2.4" fill="#dcdcdc"/>
<rect x="1040.9" y="134.0" width="2.2" height="2.4" fill="#dcdcdc"/>
<path d="M1053.4,127 h3.8 l2.8,3 v6 h-6.6z" fill="none" stroke="#dcdcdc" stroke-width="1"/><rect x="1052.6" y="132.4" width="4" height="3.8" fill="#dcdcdc"/>
<rect x="1068" y="124" width="7" height="14.4" rx="3.4" fill="#3f3f3f"/><ellipse cx="1071.5" cy="127" rx="3" ry="3.3" fill="#d4d4d4"/>
<line x1="914.7" y1="142.6" x2="1080.0" y2="142.6" stroke="#454545" stroke-width="0.8" />
<rect x="917.5" y="148.3" width="86.5" height="15.4" rx="1" fill="#575757" stroke="#494949" stroke-width="0.6"/>
<text x="922.5" y="159.2" font-size="8.8" fill="#7c7c7c" textLength="21.5" lengthAdjust="spacingAndGlyphs" >Normal</text>
<path d="M996.2,154.4 l2.3,2.6 2.3,-2.6" fill="none" stroke="#6a6a6a" stroke-width="0.8"/>
<text x="1010.3" y="159.2" font-size="8.8" fill="#7c7c7c" textLength="24.6" lengthAdjust="spacingAndGlyphs" >Opacity:</text>
<rect x="1039.7" y="148.6" width="22.8" height="14.6" fill="#494949" stroke="#454545" stroke-width="0.5"/>
<text x="1042.6" y="159.2" font-size="8.6" fill="#717171" textLength="16.6" lengthAdjust="spacingAndGlyphs" >100%</text>
<rect x="1064" y="148.6" width="8.6" height="14.6" fill="#575757" stroke="#494949" stroke-width="0.5"/>
<path d="M1066.2,154.8 l2.1,2.3 2.1,-2.3" fill="none" stroke="#6a6a6a" stroke-width="0.8"/>
<line x1="914.7" y1="166.8" x2="1080.0" y2="166.8" stroke="#454545" stroke-width="0.8" />
<text x="918.3" y="181.6" font-size="8.8" fill="#7c7c7c" textLength="15.6" lengthAdjust="spacingAndGlyphs" >Lock:</text>
<rect x="941" y="173.8" width="8" height="8.8" fill="none" stroke="#8e8e8e" stroke-width="0.9"/>
<rect x="941.6" y="174.5" width="2.3" height="2.5" fill="#8e8e8e"/>
<rect x="946.2" y="174.5" width="2.3" height="2.5" fill="#8e8e8e"/>
<rect x="943.9" y="177.0" width="2.3" height="2.5" fill="#8e8e8e"/>
<rect x="941.6" y="179.5" width="2.3" height="2.5" fill="#8e8e8e"/>
<rect x="946.2" y="179.5" width="2.3" height="2.5" fill="#8e8e8e"/>
<path d="M964.2,172.4 l1.5,1 -4.6,7.6 -2.4,-1.6 z" fill="#8e8e8e"/><path d="M958.2,180.2 l2.2,1.5 c-0.8,1.9 -2.8,2.5 -4.8,2 c1.3,-0.7 1.4,-2.1 2.6,-3.5z" fill="#8e8e8e"/>
<g stroke="#8e8e8e" stroke-width="0.9" fill="#8e8e8e" stroke-linejoin="miter"><path d="M972.072,178.2H978.3280000000001M975.2,175.072V181.32799999999997" fill="none"/><path d="M970.6,178.2l1.472,-1.472v2.944z M979.8000000000001,178.2l-1.472,-1.472v2.944z M975.2,173.6l-1.472,1.472h2.944z M975.2,182.79999999999998l-1.472,-1.472h2.944z" stroke-width="0.3"/></g>
<path d="M988.2,173 V181.2 H996.4 M985.8,175.4 H994 V183.4" fill="none" stroke="#8e8e8e" stroke-width="1"/>
<rect x="1002.2" y="177.4" width="7.6" height="6.2" rx="0.6" fill="#8e8e8e"/><path d="M1003.8,177.4 v-1.8 c0,-3 4.4,-3 4.4,0 v1.8" fill="none" stroke="#8e8e8e" stroke-width="1.1"/>
<text x="1025.8" y="181.6" font-size="8.8" fill="#7c7c7c" textLength="9.4" lengthAdjust="spacingAndGlyphs" >Fill:</text>
<rect x="1039.7" y="171.4" width="22.8" height="14.6" fill="#494949" stroke="#454545" stroke-width="0.5"/>
<text x="1042.6" y="182.0" font-size="8.6" fill="#717171" textLength="16.6" lengthAdjust="spacingAndGlyphs" >100%</text>
<rect x="1064" y="171.4" width="8.6" height="14.6" fill="#575757" stroke="#494949" stroke-width="0.5"/>
<path d="M1066.2,177.6 l2.1,2.3 2.1,-2.3" fill="none" stroke="#6a6a6a" stroke-width="0.8"/>
<rect x="914.7" y="191.4" width="165.3" height="493.0" fill="#4d4d4d" />
<rect x="1069.4" y="191.4" width="10.6" height="493.0" fill="#4a4a4a" />
<rect x="914.7" y="191.4" width="154.7" height="20.9" fill="#535353" />
<line x1="914.7" y1="212.3" x2="1069.4" y2="212.3" stroke="#454545" stroke-width="0.9" />
<line x1="935.8" y1="191.4" x2="935.8" y2="212.3" stroke="#484848" stroke-width="0.8" />
<path d="M920,202.0 c2.6,-4 7.2,-4 9.8,0 c-2.6,4 -7.2,4 -9.8,0z" fill="#e6e6e6"/><ellipse cx="924.9" cy="202.0" rx="1.9" ry="2.2" fill="#535353"/><ellipse cx="924.9" cy="202.0" rx="0.8" ry="0.9" fill="#e6e6e6"/>
<path d="M938.6,198.4 l2.4,3.6 -2.4,3.6" fill="none" stroke="#cfcfcf" stroke-width="0.8"/>
<path d="M945.8,197.1 h3.6 l0.8,1.2 h5.6 v8.7 h-10z" fill="#e2e2e2"/>
<text x="963.8" y="205.2" font-size="8.8" fill="#eaeaea" textLength="40.0" lengthAdjust="spacingAndGlyphs" >Front &amp; Back</text>
<rect x="914.7" y="212.3" width="154.7" height="20.9" fill="#535353" />
<line x1="914.7" y1="233.2" x2="1069.4" y2="233.2" stroke="#454545" stroke-width="0.9" />
<line x1="935.8" y1="212.3" x2="935.8" y2="233.2" stroke="#484848" stroke-width="0.8" />
<path d="M920,222.95 c2.6,-4 7.2,-4 9.8,0 c-2.6,4 -7.2,4 -9.8,0z" fill="#e6e6e6"/><ellipse cx="924.9" cy="222.95" rx="1.9" ry="2.2" fill="#535353"/><ellipse cx="924.9" cy="222.95" rx="0.8" ry="0.9" fill="#e6e6e6"/>
<path d="M938.6,219.35 l2.4,3.6 -2.4,3.6" fill="none" stroke="#cfcfcf" stroke-width="0.8"/>
<path d="M945.8,218.04999999999998 h3.6 l0.8,1.2 h5.6 v8.7 h-10z" fill="#e2e2e2"/>
<text x="963.8" y="226.1" font-size="8.8" fill="#eaeaea" textLength="26.6" lengthAdjust="spacingAndGlyphs" >Page 2-3</text>
<rect x="914.7" y="233.3" width="154.7" height="20.9" fill="#535353" />
<line x1="914.7" y1="254.2" x2="1069.4" y2="254.2" stroke="#454545" stroke-width="0.9" />
<line x1="935.8" y1="233.3" x2="935.8" y2="254.2" stroke="#484848" stroke-width="0.8" />
<path d="M920,243.9 c2.6,-4 7.2,-4 9.8,0 c-2.6,4 -7.2,4 -9.8,0z" fill="#e6e6e6"/><ellipse cx="924.9" cy="243.9" rx="1.9" ry="2.2" fill="#535353"/><ellipse cx="924.9" cy="243.9" rx="0.8" ry="0.9" fill="#e6e6e6"/>
<path d="M938.6,240.3 l2.4,3.6 -2.4,3.6" fill="none" stroke="#cfcfcf" stroke-width="0.8"/>
<path d="M945.8,239.0 h3.6 l0.8,1.2 h5.6 v8.7 h-10z" fill="#e2e2e2"/>
<text x="963.8" y="247.1" font-size="8.8" fill="#eaeaea" textLength="26.6" lengthAdjust="spacingAndGlyphs" >Page 4-5</text>
<rect x="914.7" y="254.2" width="154.7" height="20.9" fill="#535353" />
<line x1="914.7" y1="275.1" x2="1069.4" y2="275.1" stroke="#454545" stroke-width="0.9" />
<line x1="935.8" y1="254.2" x2="935.8" y2="275.1" stroke="#484848" stroke-width="0.8" />
<path d="M920,264.85 c2.6,-4 7.2,-4 9.8,0 c-2.6,4 -7.2,4 -9.8,0z" fill="#e6e6e6"/><ellipse cx="924.9" cy="264.85" rx="1.9" ry="2.2" fill="#535353"/><ellipse cx="924.9" cy="264.85" rx="0.8" ry="0.9" fill="#e6e6e6"/>
<path d="M938.6,261.25 l2.4,3.6 -2.4,3.6" fill="none" stroke="#cfcfcf" stroke-width="0.8"/>
<path d="M945.8,259.95000000000005 h3.6 l0.8,1.2 h5.6 v8.7 h-10z" fill="#e2e2e2"/>
<text x="963.8" y="268.1" font-size="8.8" fill="#eaeaea" textLength="26.6" lengthAdjust="spacingAndGlyphs" >Page 6-7</text>
<rect x="914.7" y="684.4" width="165.3" height="21.6" fill="#535353" />
<line x1="914.7" y1="684.4" x2="1080.0" y2="684.4" stroke="#424242" stroke-width="0.9" />
<line x1="913.3" y1="706.2" x2="1080.0" y2="706.2" stroke="#3a3a3a" stroke-width="1" />
<rect x="914.7" y="706.8" width="165.3" height="5.0" fill="#505050" />
<rect x="913.3" y="711.8" width="166.7" height="6.6" fill="#474747" />
<g fill="none" stroke="#959595" stroke-width="1.1"><rect x="940.4" y="692.4" width="5.6" height="5" rx="2.4"/><rect x="944.6" y="692.4" width="5.6" height="5" rx="2.4"/></g>
<text x="960.0" y="698.8" font-size="10.6" fill="#9c9c9c" font-style="italic" textLength="8.2" lengthAdjust="spacingAndGlyphs" >fx</text>
<rect x="977.8" y="690.2" width="9.4" height="9.6" fill="#b4b4b4"/><ellipse cx="982.5" cy="695" rx="2.7" ry="3.1" fill="#535353"/>
<ellipse cx="1002" cy="694.6" rx="4.1" ry="4.8" fill="none" stroke="#dcdcdc" stroke-width="1"/><path d="M999.2,698 A4.1,4.8 0 0 1 1004.8,691.2 Z" fill="#dcdcdc"/><rect x="1005.2" y="699.8" width="1.6" height="1.6" fill="#e6e6e6"/>
<path d="M1015.8,690.2 h3.4 l0.8,1.2 h4.4 v8.2 h-8.6z" fill="#dedede"/>
<rect x="1035.2" y="690" width="7.6" height="10" fill="none" stroke="#e2e2e2" stroke-width="1.1"/><path d="M1039,693 v4 M1037.2,695 h3.6" stroke="#e2e2e2" stroke-width="1.1"/>
<path d="M1054.2,692.4 h5.8 v7.4 h-5.8z M1053.4,691.6 h7.4 M1055.8,691.4 v-1.2 h2.6 v1.2 M1056,694 v4.4 M1058.2,694 v4.4" fill="none" stroke="#8a8a8a" stroke-width="0.9"/>
<g filter="url(#sh)">
<rect x="64" y="17.6" width="147.6" height="353.6" fill="#f0f0f0" stroke="#9c9c9c" stroke-width="0.7"/>
</g>
<rect x="65.0" y="19.3" width="142.6" height="15.6" fill="#0873d8" />
<text x="76.7" y="31.3" font-size="10.3" fill="#ffffff" textLength="22.0" lengthAdjust="spacingAndGlyphs" >Mode</text>
<path d="M203,24.5 l2.8,2.8 -2.8,2.8z" fill="#ffffff"/>
<line x1="65.2" y1="38.6" x2="210.4" y2="38.6" stroke="#c9c9c9" stroke-width="0.9" />
<text x="76.7" y="57.3" font-size="10.3" fill="#7d7d7d" textLength="47.0" lengthAdjust="spacingAndGlyphs" >Adjustments</text>
<path d="M203,50.50000000000001 l2.8,2.8 -2.8,2.8z" fill="#3c3c3c"/>
<line x1="65.2" y1="64.3" x2="210.4" y2="64.3" stroke="#c9c9c9" stroke-width="0.9" />
<text x="76.7" y="81.4" font-size="10.3" fill="#7d7d7d" textLength="38.5" lengthAdjust="spacingAndGlyphs" >Auto Tone</text>
<text x="153.7" y="81.4" font-size="10.3" fill="#7d7d7d" textLength="45.0" lengthAdjust="spacingAndGlyphs" >Shift+Ctrl+L</text>
<text x="76.7" y="97.3" font-size="10.3" fill="#7d7d7d" textLength="52.0" lengthAdjust="spacingAndGlyphs" >Auto Contrast</text>
<text x="137.7" y="97.3" font-size="10.3" fill="#7d7d7d" textLength="61.0" lengthAdjust="spacingAndGlyphs" >Alt+Shift+Ctrl+L</text>
<text x="76.7" y="113.0" font-size="10.3" fill="#7d7d7d" textLength="40.5" lengthAdjust="spacingAndGlyphs" >Auto Color</text>
<text x="152.9" y="113.0" font-size="10.3" fill="#7d7d7d" textLength="45.8" lengthAdjust="spacingAndGlyphs" >Shift+Ctrl+B</text>
<line x1="65.2" y1="121.3" x2="210.4" y2="121.3" stroke="#c9c9c9" stroke-width="0.9" />
<text x="76.7" y="138.6" font-size="10.3" fill="#141414" textLength="45.0" lengthAdjust="spacingAndGlyphs" >Image Size...</text>
<text x="162.0" y="138.6" font-size="10.3" fill="#141414" textLength="36.7" lengthAdjust="spacingAndGlyphs" >Alt+Ctrl+I</text>
<text x="76.7" y="154.2" font-size="10.3" fill="#141414" textLength="48.7" lengthAdjust="spacingAndGlyphs" >Canvas Size...</text>
<text x="158.7" y="154.2" font-size="10.3" fill="#141414" textLength="40.0" lengthAdjust="spacingAndGlyphs" >Alt+Ctrl+C</text>
<text x="76.7" y="170.2" font-size="10.3" fill="#141414" textLength="56.0" lengthAdjust="spacingAndGlyphs" >Image Rotation</text>
<path d="M203,163.39999999999998 l2.8,2.8 -2.8,2.8z" fill="#141414"/>
<text x="76.7" y="186.0" font-size="10.3" fill="#7d7d7d" textLength="18.3" lengthAdjust="spacingAndGlyphs" >Crop</text>
<text x="76.7" y="201.6" font-size="10.3" fill="#141414" textLength="23.3" lengthAdjust="spacingAndGlyphs" >Trim...</text>
<text x="76.7" y="217.6" font-size="10.3" fill="#141414" textLength="35.5" lengthAdjust="spacingAndGlyphs" >Reveal All</text>
<line x1="65.2" y1="226.2" x2="210.4" y2="226.2" stroke="#c9c9c9" stroke-width="0.9" />
<text x="76.7" y="243.8" font-size="10.3" fill="#141414" textLength="40.5" lengthAdjust="spacingAndGlyphs" >Duplicate...</text>
<text x="76.7" y="259.2" font-size="10.3" fill="#7d7d7d" textLength="52.5" lengthAdjust="spacingAndGlyphs" >Apply Image...</text>
<text x="76.7" y="274.6" font-size="10.3" fill="#7d7d7d" textLength="51.0" lengthAdjust="spacingAndGlyphs" >Calculations...</text>
<line x1="65.2" y1="283.0" x2="210.4" y2="283.0" stroke="#c9c9c9" stroke-width="0.9" />
<text x="76.7" y="300.2" font-size="10.3" fill="#141414" textLength="32.3" lengthAdjust="spacingAndGlyphs" >Variables</text>
<path d="M203,293.40000000000003 l2.8,2.8 -2.8,2.8z" fill="#141414"/>
<text x="76.7" y="316.0" font-size="10.3" fill="#7d7d7d" textLength="59.3" lengthAdjust="spacingAndGlyphs" >Apply Data Set...</text>
<line x1="65.2" y1="324.4" x2="210.4" y2="324.4" stroke="#c9c9c9" stroke-width="0.9" />
<text x="76.7" y="340.6" font-size="10.3" fill="#7d7d7d" textLength="22.3" lengthAdjust="spacingAndGlyphs" >Trap...</text>
<line x1="65.2" y1="349.5" x2="210.4" y2="349.5" stroke="#c9c9c9" stroke-width="0.9" />
<text x="76.7" y="366.6" font-size="10.3" fill="#141414" textLength="29.8" lengthAdjust="spacingAndGlyphs" >Analysis</text>
<path d="M203,359.8 l2.8,2.8 -2.8,2.8z" fill="#141414"/>
<g filter="url(#sh)">
<rect x="208.5" y="17.6" width="81.6" height="212.4" fill="#f0f0f0" stroke="#9c9c9c" stroke-width="0.7"/>
</g>
<text x="222.0" y="31.1" font-size="10.3" fill="#7d7d7d" textLength="26.5" lengthAdjust="spacingAndGlyphs" >Bitmap</text>
<text x="222.0" y="47.3" font-size="10.3" fill="#141414" textLength="35.0" lengthAdjust="spacingAndGlyphs" >Grayscale</text>
<text x="222.0" y="62.9" font-size="10.3" fill="#7d7d7d" textLength="32.0" lengthAdjust="spacingAndGlyphs" >Duotone</text>
<text x="222.0" y="78.6" font-size="10.3" fill="#7d7d7d" textLength="51.5" lengthAdjust="spacingAndGlyphs" >Indexed Color</text>
<text x="222.0" y="94.6" font-size="10.3" fill="#141414" textLength="37.5" lengthAdjust="spacingAndGlyphs" >RGB Color</text>
<text x="222.0" y="110.4" font-size="10.3" fill="#141414" textLength="45.5" lengthAdjust="spacingAndGlyphs" >CMYK Color</text>
<path d="M212.6,107.0 l1.8,2.4 3.2,-5.2" fill="none" stroke="#141414" stroke-width="1.3"/>
<text x="222.0" y="126.2" font-size="10.3" fill="#141414" textLength="35.5" lengthAdjust="spacingAndGlyphs" >Lab Color</text>
<text x="222.0" y="142.2" font-size="10.3" fill="#141414" textLength="49.0" lengthAdjust="spacingAndGlyphs" >Multichannel</text>
<line x1="209.6" y1="150.3" x2="289.0" y2="150.3" stroke="#c9c9c9" stroke-width="0.9" />
<text x="222.0" y="167.3" font-size="10.3" fill="#141414" textLength="53.5" lengthAdjust="spacingAndGlyphs" >8 Bits/Channel</text>
<path d="M212.6,163.89999999999998 l1.8,2.4 3.2,-5.2" fill="none" stroke="#141414" stroke-width="1.3"/>
<text x="222.0" y="183.3" font-size="10.3" fill="#141414" textLength="57.5" lengthAdjust="spacingAndGlyphs" >16 Bits/Channel</text>
<text x="222.0" y="199.0" font-size="10.3" fill="#7d7d7d" textLength="57.5" lengthAdjust="spacingAndGlyphs" >32 Bits/Channel</text>
<line x1="209.6" y1="207.7" x2="289.0" y2="207.7" stroke="#c9c9c9" stroke-width="0.9" />
<text x="222.0" y="223.9" font-size="10.3" fill="#7d7d7d" textLength="47.0" lengthAdjust="spacingAndGlyphs" >Color Table...</text>
<g transform="translate(0,683.2) scale(1,1.5)" font-size="36" font-weight="bold" fill="#d6b446" stroke="#d6b446" stroke-width="2.4" stroke-linejoin="round" style="font-family:'DejaVu Sans',sans-serif" xml:lang="fa">
<text x="707.8" y="0" direction="rtl" text-anchor="start" textLength="125.1" lengthAdjust="spacingAndGlyphs">صفحه</text>
<text x="569.3" y="0" direction="rtl" text-anchor="start" textLength="95.1" lengthAdjust="spacingAndGlyphs">پشت</text>
<text x="457.5" y="0" direction="rtl" text-anchor="start" textLength="13.3" lengthAdjust="spacingAndGlyphs">و</text>
<text x="426.0" y="0" direction="rtl" text-anchor="start" textLength="32.8" lengthAdjust="spacingAndGlyphs">رو</text>
</g>
</svg>
</body>
</html>
